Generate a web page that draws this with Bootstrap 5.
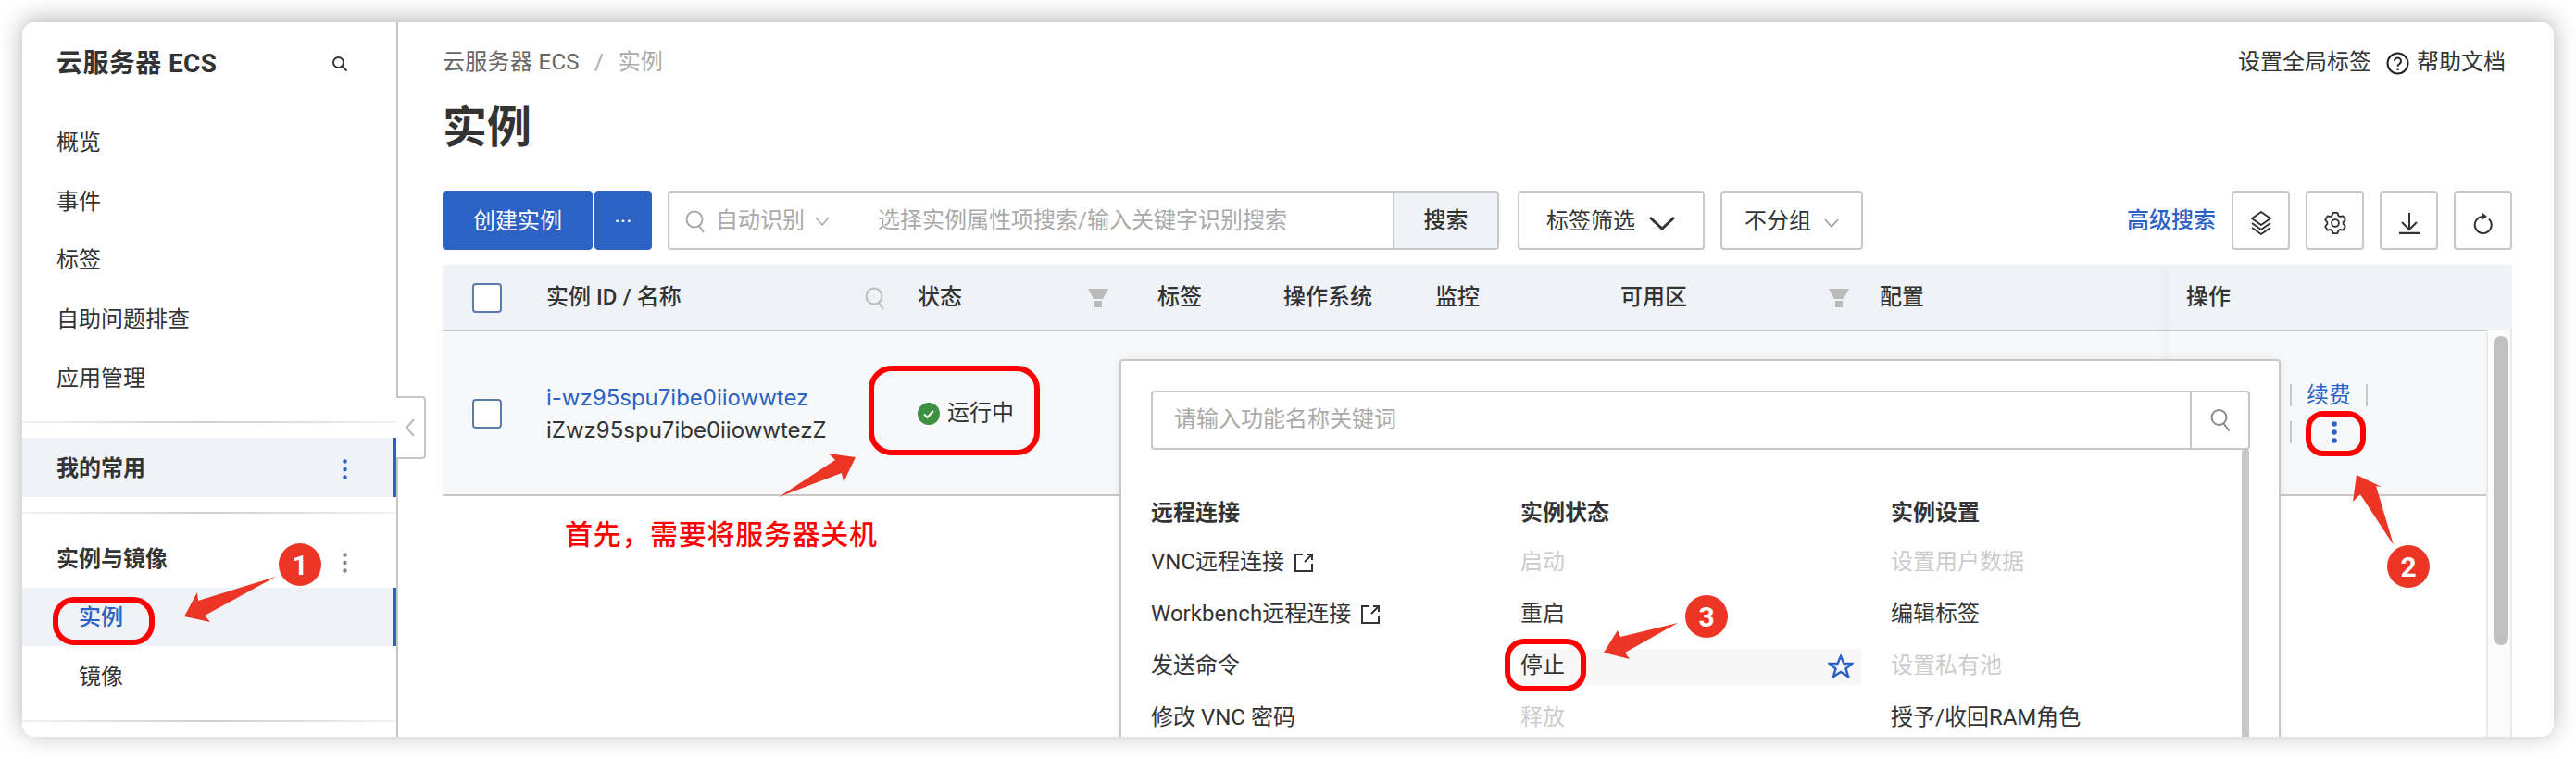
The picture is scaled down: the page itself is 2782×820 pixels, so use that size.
<!DOCTYPE html>
<html lang="zh-CN">
<head>
    <meta charset="UTF-8">
    <title>云服务器 ECS - 实例</title>
    <link href="https://cdn.jsdelivr.net/npm/bootstrap@5.3.0/dist/css/bootstrap.min.css" rel="stylesheet">
    <style>
        html, body { height: 100%; }
        body {
            margin: 0; background: #fff; color: #333; overflow: hidden;
            font-family: Roboto, "Noto Sans CJK SC", sans-serif; font-size: 24px; line-height: 1.3;
            width: 2782px; height: 820px; position: relative;
        }
        .ecs-window {
            position: absolute; left: 24px; top: 24px; width: 2734px; height: 772px;
            background: #fff; border-radius: 14px; overflow: hidden; display: flex;
        }
        .ecs-shadow {
            position: absolute; left: 24px; top: 24px; width: 2734px; height: 772px; border-radius: 14px;
            box-shadow: 0 -3px 26px rgba(0,0,0,.3);
        }
        /* sidebar */
        .side { width: 406px; flex: none; border-right: 2px solid #c8c8c8; }
        .side-title { height: 98px; padding: 0 52px 8px 37px; }
        .side-title h1 { font-size: 28px; font-weight: 700; margin: 0; color: #333; letter-spacing: .4px; }
        .side-link { height: 64px; padding: 3px 37px 0; color: #333; display: flex; align-items: center; justify-content: space-between; }
        .side-link.sub { padding-left: 61px; }
        .side-link.strong { font-weight: 700; font-size: 24px; padding-right: 49px; }
        .side-link.on { background: #eff2f7; border-right: 4px solid #2b62c4; }
        .side-link.on.sub { color: #2b62c4; font-weight: 500; }
        .side-rule { height: 2px; margin: 16px 0; background: linear-gradient(90deg, #f2f2f2, #cfcfcf 50%, #f2f2f2); }
        .side-group { height: 64px; padding: 18px 53px 0 37px; font-weight: 700; display: flex; justify-content: space-between; align-items: flex-start; }
        .side-tab {
            position: absolute; left: 404px; top: 404px; width: 32px; height: 68px; background: #fff;
            border: 2px solid #c8c8c8; border-left: 0; border-radius: 0 4px 4px 0;
            display: flex; align-items: center; justify-content: center;
        }
        /* main */
        .ecs-main { flex: 1; min-width: 0; padding: 0 45px 0 48px; position: relative; }
        .top-bar { height: 86px; padding: 2px 7px 0 0; }
        .top-bar .breadcrumb { --bs-breadcrumb-margin-bottom: 0; --bs-breadcrumb-divider-color: #aaa; --bs-breadcrumb-item-active-color: #aaa; --bs-breadcrumb-item-padding-x: 16px; }
        .top-bar .breadcrumb a { color: #666; text-decoration: none; letter-spacing: .3px; }
        .top-link { color: #333; }
        .page-title { font-size: 48px; font-weight: 700; height: 56px; line-height: 56px; margin: 0 0 40px; color: #333; }
        .tool-row { height: 64px; margin-bottom: 16px; }
        .tool-row .btn { --bs-btn-font-size: 24px; --bs-btn-border-radius: 4px; height: 64px; padding: 2px 0 0; }
        .btn-make { --bs-btn-bg: #2b62c4; --bs-btn-border-color: #2b62c4; --bs-btn-hover-bg: #2b62c4; width: 162px; margin-right: 2px; color: #fff; }
        .btn-make.btn-more { width: 62px; margin-right: 0; }
        .btn-line { --bs-btn-border-color: #c8c8c8; --bs-btn-color: #333; --bs-btn-bg: #fff; border-width: 2px; }
        .find-box { width: 898px; margin-left: 17px; height: 64px; border: 2px solid #c8c8c8; border-radius: 4px; }
        .find-kind { width: 225px; padding: 2px 0 0 17px; color: #aaa; gap: 7px; }
        .find-hint { flex: 1; color: #aaa; padding-top: 2px; }
        .find-go { width: 113px; background: #eff2f7; border-left: 2px solid #c8c8c8; color: #333; font-weight: 500; padding-top: 2px; }
        .btn-tags { width: 202px; margin-left: 20px; font-weight: 400; }
        .btn-group-none { width: 154px; margin-left: 17px; }
        .more-find { color: #2b62c4; font-weight: 500; margin-right: 17px; padding-top: 2px; }
        .btn-icon { width: 63px; margin-left: 17px; }
        .more-find + .btn-icon { margin-left: 0; }
        /* table */
        .ins-wrap { position: relative; height: 510px; }
        .ins-table { table-layout: fixed; width: 2235px; margin: 0; font-size: 24px; color: #333; --bs-table-bg: transparent; }
        .ins-table th { height: 71px; background: #eff2f7; border-bottom: 2px solid #c8c8c8; font-weight: 500; padding: 2px 0 0; vertical-align: middle; }
        .ins-table td { height: 178px; background: #f7f8fa; border-bottom: 2px solid #c8c8c8; padding: 2px 0 0; vertical-align: middle; }
        .ins-table .pad-op { padding-left: 18px; }
        .chk { width: 32px; height: 32px; margin: 0 0 0 32px; border: 2px solid #5b7ca8; border-radius: 4px; background: #fff; display: block; }
        .ins-id { color: #2b62c4; text-decoration: none; display: block; line-height: 35px; }
        .ins-id.long, .ins-name { font-family: Inter, Roboto, sans-serif; }
        .ins-name { line-height: 35px; }
        .col-find { margin-right: 34px; }
        .col-funnel { margin-right: 53px; }
        .col-funnel.zone { margin-right: 33px; }
        .op-shade { position: absolute; left: 1865px; top: 0; bottom: 0; width: 2px; box-shadow: -5px 0 8px rgba(0,0,0,.1); background: transparent; }
        .op-line { height: 40px; display: flex; align-items: center; }
        .op-gap { width: 2px; height: 24px; background: #c8c8c8; flex: none; }
        .scroll-track { position: absolute; right: 0; width: 28px; top: 71px; bottom: 0; border: solid #e9e9e9; border-width: 0 2px; background: #fbfbfb; }
        .scroll-thumb { position: absolute; left: 6px; top: 6px; width: 16px; height: 334px; background: #c0c0c0; border-radius: 8px; }
        /* action menu */
        .act-menu {
            position: absolute; left: 1185px; top: 364px; width: 1254px; height: 460px; background: #fff;
            border: 2px solid #c8c8c8; border-radius: 4px; padding: 32px 32px 0; box-shadow: 0 0 10px rgba(0,0,0,.08);
        }
        .act-find { height: 64px; border: 2px solid #c8c8c8; border-radius: 4px; width: 1187px; color: #aaa; }
        .act-find span { flex: 1; padding-left: 23px; }
        .act-find-btn { width: 63px; height: 100%; border-left: 2px solid #c8c8c8; }
        .act-cols { display: grid; grid-template-columns: 399px 400px 1fr; margin-top: 44px; }
        .act-head { height: 50px; font-weight: 700; display: flex; align-items: center; }
        .act-item { height: 56px; display: flex; align-items: center; }
        .act-item.off { color: #ccc; }
        .act-hover { width: 368px; height: 39px; background: #f7f7f7; display: flex; align-items: center; justify-content: space-between; padding-right: 8px; }
        .act-thumb { position: absolute; right: 32px; top: 95px; width: 8px; height: 400px; background: #c8c8c8; border-radius: 4px 4px 0 0; }
        .ext-ico { margin-left: 10px; }
        /* red notes on top of the screenshot */
        .mark-layer { position: absolute; left: 0; top: 0; pointer-events: none; }
        .mark-num { font: 700 30px Roboto, sans-serif; fill: #fff; text-anchor: middle; }
        .red-note { position: absolute; left: 610px; top: 558px; font-size: 30px; letter-spacing: .7px; line-height: 40px; color: #f00; font-weight: 500; white-space: nowrap; }
    </style>
</head>
<body>
    <div class="ecs-shadow"></div>
    <div class="ecs-window">
        <aside class="side d-flex flex-column">
            <div class="side-title d-flex align-items-center justify-content-between">
                <h1>云服务器 ECS</h1>
                <svg width="18" height="18" viewBox="0 0 18 18" fill="none" stroke="#333" stroke-width="2"><circle cx="7.5" cy="7.5" r="5.5"/><path d="M11.5 11.5l5 5"/></svg>
            </div>
            <div class="side-link">概览</div>
            <div class="side-link">事件</div>
            <div class="side-link">标签</div>
            <div class="side-link">自助问题排查</div>
            <div class="side-link">应用管理</div>
            <div class="side-rule"></div>
            <div class="side-link strong on">我的常用
                <svg width="5" height="22" viewBox="0 0 5 22" fill="#2b62c4"><circle cx="2.5" cy="2.5" r="2.2"/><circle cx="2.5" cy="11" r="2.2"/><circle cx="2.5" cy="19.5" r="2.2"/></svg>
            </div>
            <div class="side-rule"></div>
            <div class="side-group">实例与镜像
                <svg class="mt-2" width="5" height="22" viewBox="0 0 5 22" fill="#888"><circle cx="2.5" cy="2.5" r="2.2"/><circle cx="2.5" cy="11" r="2.2"/><circle cx="2.5" cy="19.5" r="2.2"/></svg>
            </div>
            <div class="side-link sub on">实例</div>
            <div class="side-link sub">镜像</div>
            <div class="side-rule"></div>
        </aside>
        <div class="side-tab">
            <svg width="12" height="24" viewBox="0 0 12 24" fill="none" stroke="#bbb" stroke-width="2"><path d="M10 3L2 12l8 9"/></svg>
        </div>

        <main class="ecs-main d-flex flex-column">
            <div class="top-bar d-flex align-items-center justify-content-between">
                <nav>
                    <ol class="breadcrumb">
                        <li class="breadcrumb-item"><a href="#">云服务器 ECS</a></li>
                        <li class="breadcrumb-item active">实例</li>
                    </ol>
                </nav>
                <div class="d-flex align-items-center">
                    <span class="top-link">设置全局标签</span>
                    <svg class="ms-3 me-2" width="25" height="25" viewBox="0 0 25 25" fill="none" stroke="#222" stroke-width="2"><circle cx="12.5" cy="12.5" r="11"/><path d="M9 10a3.5 3.5 0 1 1 5.6 2.8c-1.3 1-2.1 1.500-2.100 3"/><path d="M12.500 18.500v1.500"/></svg>
                    <span class="top-link">帮助文档</span>
                </div>
            </div>
            <h2 class="page-title">实例</h2>

            <div class="tool-row d-flex align-items-center">
                <button class="btn btn-make">创建实例</button>
                <button class="btn btn-make btn-more">···</button>
                <div class="find-box d-flex align-items-center">
                    <div class="find-kind d-flex align-items-center">
                        <svg width="22" height="26" viewBox="0 0 22 26" fill="none" stroke="#aaa" stroke-width="2"><circle cx="10" cy="11" r="8.500"/><path d="M15 18l5 7"/></svg>
                        <span class="ms-1">自动识别</span>
                        <svg class="ms-1" width="16" height="10" viewBox="0 0 16 10" fill="none" stroke="#aaa" stroke-width="1.500"><path d="M1 1l7 8 7-8"/></svg>
                    </div>
                    <div class="find-hint">选择实例属性项搜索/输入关键字识别搜索</div>
                    <div class="find-go d-flex h-100 align-items-center justify-content-center">搜索</div>
                </div>
                <button class="btn btn-line btn-tags">标签筛选
                    <svg class="ms-2" width="30" height="16" viewBox="0 0 30 16" fill="none" stroke="#333" stroke-width="3"><path d="M2 2l13 12L28 2"/></svg>
                </button>
                <button class="btn btn-line btn-group-none">不分组
                    <svg class="ms-2" width="16" height="10" viewBox="0 0 16 10" fill="none" stroke="#999" stroke-width="1.500"><path d="M1 1l7 8 7-8"/></svg>
                </button>
                <span class="more-find ms-auto">高级搜索</span>
                <button class="btn btn-line btn-icon">
                    <svg width="24" height="28" viewBox="0 0 24 28" fill="none" stroke="#333" stroke-width="2" stroke-linejoin="round"><path d="M12 2l10 7-10 7L2 9z"/><path d="M2 14l10 7 10-7"/><path d="M2 19l10 7 10-7"/></svg>
                </button>
                <button class="btn btn-line btn-icon">
                    <svg width="26" height="28" viewBox="0 0 24 24" fill="none" stroke="#333" stroke-width="1.700" stroke-linejoin="round"><path d="M9.820 1.730L14.180 1.730L15.250 4.690L16.700 5.530L19.800 4.970L21.990 8.760L19.960 11.160L19.960 12.840L21.990 15.240L19.800 19.030L16.700 18.470L15.250 19.310L14.180 22.270L9.820 22.270L8.750 19.310L7.300 18.470L4.200 19.030L2.010 15.240L4.040 12.840L4.040 11.160L2.010 8.760L4.200 4.970L7.300 5.530L8.750 4.690Z"/><circle cx="12" cy="12" r="3.600"/></svg>
                </button>
                <button class="btn btn-line btn-icon">
                    <svg width="24" height="24" viewBox="0 0 24 24" fill="none" stroke="#333" stroke-width="2"><path d="M12 1v17M4 11l8 8 8-8"/><path d="M1 23h22" stroke-width="2.500"/></svg>
                </button>
                <button class="btn btn-line btn-icon">
                    <svg width="22" height="26" viewBox="0 0 22 26" fill="none" stroke="#333" stroke-width="2"><path d="M10 6a9 9 0 1 0 7 2.500"/><path d="M9 1l6 5-6 4z" fill="#333" stroke="none"/></svg>
                </button>
            </div>

            <div class="ins-wrap">
                <table class="table ins-table">
                    <colgroup>
                        <col style="width:112px"><col style="width:401px"><col style="width:259px"><col style="width:136px"><col style="width:164px"><col style="width:200px"><col style="width:280px"><col style="width:313px"><col style="width:370px">
                    </colgroup>
                    <thead>
                        <tr>
                            <th><span class="chk"></span></th>
                            <th><div class="d-flex align-items-center justify-content-between"><span>实例 ID / 名称</span>
                                <svg class="col-find" width="24" height="26" viewBox="0 0 22 26" fill="none" stroke="#bbb" stroke-width="2"><circle cx="10" cy="11" r="8.500"/><path d="M15 18l5 7"/></svg>
                            </div></th>
                            <th><div class="d-flex align-items-center justify-content-between"><span>状态</span>
                                <svg class="col-funnel" width="22" height="20" viewBox="0 0 22 20" fill="#bbb"><path d="M0 0h22l-6 11H6z"/><path d="M7 13h8v7H7z"/></svg>
                            </div></th>
                            <th>标签</th>
                            <th>操作系统</th>
                            <th>监控</th>
                            <th><div class="d-flex align-items-center justify-content-between"><span>可用区</span>
                                <svg class="col-funnel zone" width="22" height="20" viewBox="0 0 22 20" fill="#bbb"><path d="M0 0h22l-6 11H6z"/><path d="M7 13h8v7H7z"/></svg>
                            </div></th>
                            <th>配置</th>
                            <th class="pad-op">操作</th>
                        </tr>
                    </thead>
                    <tbody>
                        <tr>
                            <td><span class="chk"></span></td>
                            <td><a class="ins-id long" href="#">i-wz95spu7ibe0iiowwtez</a><div class="ins-name">iZwz95spu7ibe0iiowwtezZ</div></td>
                            <td>
                                <div class="d-flex align-items-center">
                                    <svg class="me-2" width="24" height="24" viewBox="0 0 24 24"><circle cx="12" cy="12" r="12" fill="#3f9142"/><path d="M7 12.500l3.500 3.500L17 9" fill="none" stroke="#fff" stroke-width="2"/></svg>
                                    <span>运行中</span>
                                </div>
                            </td>
                            <td></td><td></td><td></td><td></td><td></td>
                            <td>
                                <div style="padding-left:130px">
                                    <div class="op-line"><span class="op-gap"></span><a href="#" class="text-decoration-none ins-id ms-3 me-3">续费</a><span class="op-gap"></span></div>
                                    <div class="op-line"><span class="op-gap"></span><svg style="margin-left:43px" width="6" height="24" viewBox="0 0 6 24" fill="#2b62c4"><circle cx="3" cy="3" r="2.800"/><circle cx="3" cy="12" r="2.800"/><circle cx="3" cy="21" r="2.800"/></svg></div>
                                </div>
                            </td>
                        </tr>
                    </tbody>
                </table>
                <div class="op-shade"></div>
                <div class="scroll-track"><div class="scroll-thumb"></div></div>
            </div>
        </main>

        <div class="act-menu">
            <div class="act-find d-flex align-items-center">
                <span>请输入功能名称关键词</span>
                <div class="act-find-btn d-flex align-items-center justify-content-center">
                    <svg width="24" height="26" viewBox="0 0 22 26" fill="none" stroke="#888" stroke-width="2"><circle cx="9.500" cy="10" r="8"/><path d="M14.500 16.500l6 8"/></svg>
                </div>
            </div>
            <div class="act-cols">
                <div>
                    <div class="act-head">远程连接</div>
                    <div class="act-item">VNC远程连接
                        <svg class="ext-ico" width="22" height="22" viewBox="0 0 22 22" fill="none" stroke="#333" stroke-width="2"><path d="M10 2H2v18h18v-8"/><path d="M12 10l8-8M14 2h6v6"/></svg>
                    </div>
                    <div class="act-item">Workbench远程连接
                        <svg class="ext-ico" width="22" height="22" viewBox="0 0 22 22" fill="none" stroke="#333" stroke-width="2"><path d="M10 2H2v18h18v-8"/><path d="M12 10l8-8M14 2h6v6"/></svg>
                    </div>
                    <div class="act-item">发送命令</div>
                    <div class="act-item">修改 VNC 密码</div>
                </div>
                <div>
                    <div class="act-head">实例状态</div>
                    <div class="act-item off">启动</div>
                    <div class="act-item">重启</div>
                    <div class="act-item"><div class="act-hover">停止
                        <svg width="28" height="26" viewBox="0 0 28 26" fill="none" stroke="#2b62c4" stroke-width="2.500" stroke-linejoin="miter"><path d="M14 2l3.500 8H26l-6.500 5.500L22 24l-8-5-8 5 2.500-8.500L2 10h8.500z"/></svg>
                    </div></div>
                    <div class="act-item off">释放</div>
                </div>
                <div>
                    <div class="act-head">实例设置</div>
                    <div class="act-item off">设置用户数据</div>
                    <div class="act-item">编辑标签</div>
                    <div class="act-item off">设置私有池</div>
                    <div class="act-item">授予/收回RAM角色</div>
                </div>
            </div>
            <div class="act-thumb"></div>
        </div>
    </div>

    <div class="red-note">首先，需要将服务器关机</div>
    <svg class="mark-layer" width="2782" height="820" viewBox="0 0 2782 820">
        <g fill="none" stroke="#f00" stroke-width="6">
            <rect x="60" y="648" width="104" height="46" rx="20"/>
            <rect x="941" y="398" width="179" height="91" rx="22"/>
            <rect x="2493" y="447" width="59" height="43" rx="16"/>
            <rect x="1628" y="693" width="82" height="51" rx="18"/>
        </g>
        <g fill="#ec3524">
            <polygon points="298,623 221,665 227,672 199,666 213,640 214,649"/>
            <polygon points="2585,589 2549,534 2541,542 2545,513 2572,526 2566,525"/>
            <polygon points="1812,673 1755,705 1760,712 1732,705 1747,681 1750,688"/>
            <polygon points="841,537 902,497 895,490 924,494 911,521 909,511"/>
            <circle cx="324" cy="610" r="23"/>
            <circle cx="2601" cy="612" r="23"/>
            <circle cx="1843" cy="666" r="23"/>
        </g>
        <text class="mark-num" x="324" y="621">1</text>
        <text class="mark-num" x="2601" y="623">2</text>
        <text class="mark-num" x="1843" y="677">3</text>
    </svg>

    <script src="https://cdn.jsdelivr.net/npm/bootstrap@5.3.0/dist/js/bootstrap.bundle.min.js"></script>
</body>
</html>
